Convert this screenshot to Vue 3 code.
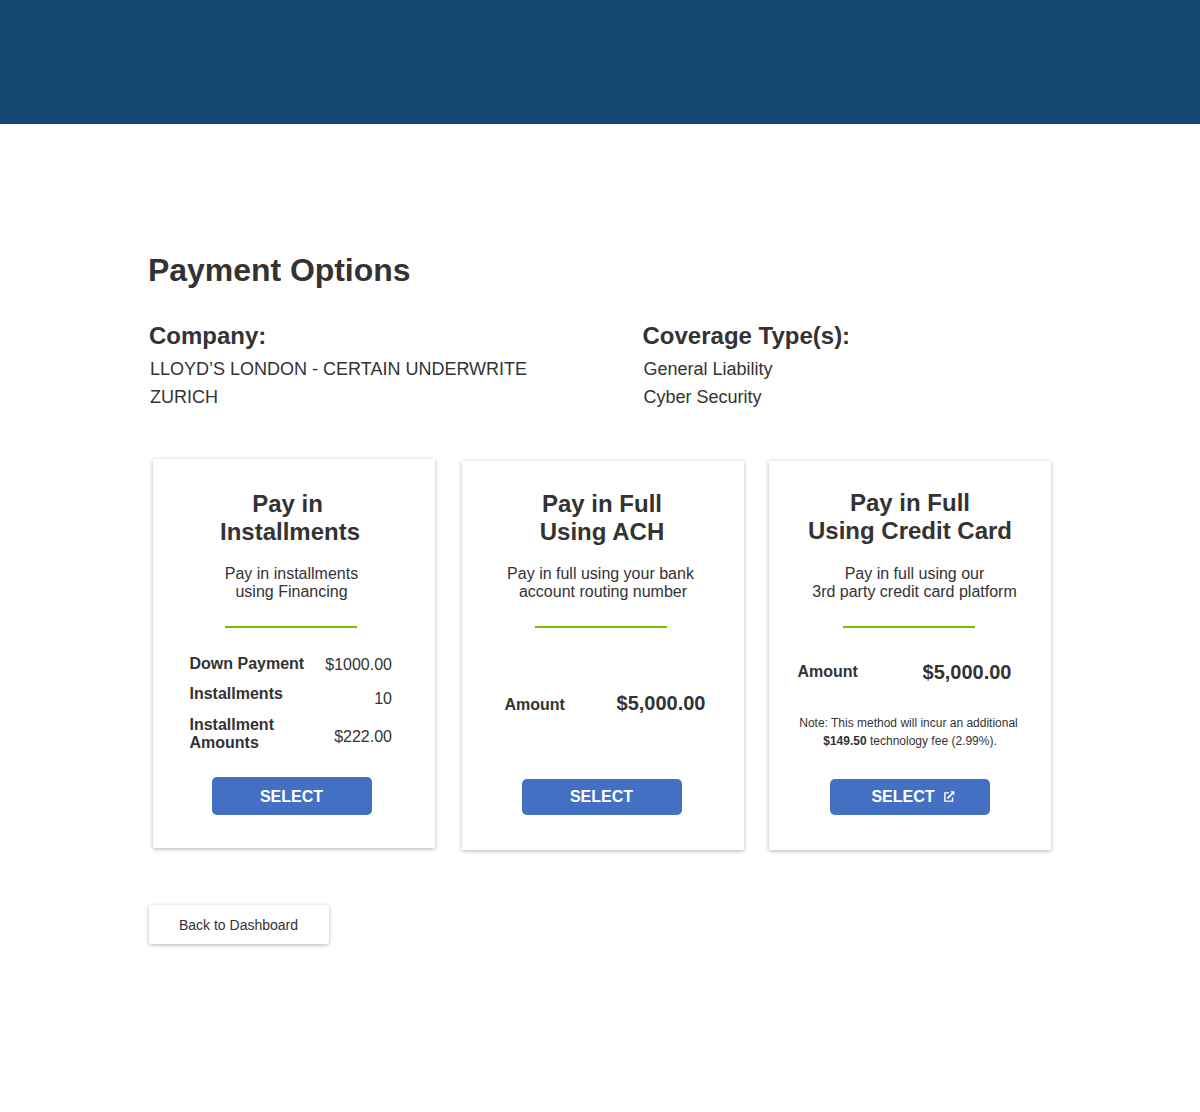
<script setup>
import { ref } from 'vue';

const companies = ref(['LLOYD’S LONDON - CERTAIN UNDERWRITE', 'ZURICH']);
const coverages = ref(['General Liability', 'Cyber Security']);
</script>

<template>
  <div class="page">
    <header class="banner"></header>
    <main class="content">
      <h1>Payment Options</h1>

      <section class="summary">
        <div class="summary-col">
          <h2>Company:</h2>
          <ul>
            <li v-for="company in companies" :key="company">{{ company }}</li>
          </ul>
        </div>
        <div class="summary-col">
          <h2>Coverage Type(s):</h2>
          <ul>
            <li v-for="coverage in coverages" :key="coverage">{{ coverage }}</li>
          </ul>
        </div>
      </section>

      <section class="cards">
        <article class="card installments">
          <h3><span class="lead">Pay in</span><br>Installments</h3>
          <p class="info">Pay in installments<br>using Financing</p>
          <hr>
          <div class="details plan">
            <ul class="labels">
              <li>Down Payment</li>
              <li>Installments</li>
              <li>Installment<br>Amounts</li>
            </ul>
            <ul class="values">
              <li>$1000.00</li>
              <li>10</li>
              <li>$222.00</li>
            </ul>
          </div>
          <button class="btn">SELECT</button>
        </article>

        <article class="card ach">
          <h3>Pay in Full<br>Using ACH</h3>
          <p class="info"><span class="lead">Pay in full using your bank</span><br>account routing number</p>
          <hr>
          <div class="details">
            <div class="amount">
              <span class="label">Amount</span>
              <span class="total">$5,000.00</span>
            </div>
          </div>
          <button class="btn">SELECT</button>
        </article>

        <article class="card credit">
          <h3>Pay in Full<br>Using Credit Card</h3>
          <p class="info">Pay in full using our<br>3rd party credit card platform</p>
          <hr>
          <div class="details">
            <div class="amount">
              <span class="label">Amount</span>
              <span class="total">$5,000.00</span>
            </div>
            <p class="note"><span class="lead">Note: This method will incur an additional</span><br><b>$149.50</b> technology fee (2.99%).</p>
          </div>
          <button class="btn">
            SELECT
            <svg class="external" viewBox="0 0 11 11" width="11" height="11" fill="none" stroke="#fff">
              <path d="M5 1.9H0.9V10.1H8.6V6.4" stroke-width="1.4" />
              <path d="M3.4 7.4L8.4 2.4" stroke-width="1.7" />
              <path d="M6.2 0.3H10.3V4.4Z" fill="#fff" stroke="none" />
            </svg>
          </button>
        </article>
      </section>

      <button class="back">Back to Dashboard</button>
    </main>
  </div>
</template>

<style>
body {
  margin: 0;
  background: #fff;
}
</style>

<style scoped>
.page {
  min-height: 1112px;
  font-family: "Liberation Sans", Arial, sans-serif;
  font-size: 16px;
  line-height: 18px;
  color: #333;
}
.banner {
  height: 124px;
  background: #144771;
}
.content {
  width: 904px;
  padding: 127px 0 0 148px;
}
h1, h2, h3, p, ul {
  margin: 0;
  padding: 0;
}
ul {
  list-style: none;
}
h1 {
  font-size: 32px;
  line-height: 38px;
  letter-spacing: -0.05px;
}
.summary {
  display: grid;
  grid-template-columns: 493.5px 1fr;
  margin: 33px 0 0 1px;
}
.summary h2 {
  font-size: 24px;
  line-height: 28px;
}
.summary ul {
  margin-top: 5px;
  padding-left: 1px;
  font-size: 18px;
  line-height: 28px;
}
.cards {
  display: flex;
  align-items: flex-start;
  margin: 48px 0 0 5px;
}
.card {
  box-sizing: border-box;
  display: flex;
  flex-direction: column;
  align-items: center;
  width: 282px;
  height: 389px;
  background: #fff;
  border-radius: 1px;
  box-shadow: 0 1px 4px rgba(0, 0, 0, 0.3);
}
.installments {
  padding: 31px 6px 0 0;
}
.ach {
  margin: 2px 25px 0 27px;
  padding: 29px 4px 0 0;
}
.credit {
  margin-top: 2px;
  padding-top: 28px;
}
.card h3 {
  font-size: 24px;
  line-height: 28px;
  text-align: center;
}
.installments h3 {
  padding-right: 2px;
}
.ach h3 {
  padding-left: 2px;
}
.lead {
  padding-right: 5px;
}
.info {
  margin-top: 19px;
  text-align: center;
}
.installments .info {
  padding-left: 1px;
}
.ach .info {
  padding-left: 4px;
}
.credit .info {
  margin-top: 20px;
  padding-left: 9px;
}
.card hr {
  width: 132px;
  height: 2px;
  margin: 25px 0 0;
  border: 0;
  background: #7fba00;
}
.credit hr {
  margin-right: 2px;
}
.details {
  box-sizing: border-box;
  width: 203px;
  height: 151px;
}
.plan {
  display: flex;
  justify-content: space-between;
  height: 149px;
  padding-top: 27px;
}
.labels {
  font-weight: bold;
}
.labels li {
  margin-bottom: 12px;
}
.labels li:last-child {
  margin-top: 13px;
}
.values {
  padding: 1px 0.5px 0 0;
  text-align: right;
}
.values li + li {
  margin-top: 16px;
}
.values li:last-child {
  margin-top: 20px;
}
.amount {
  display: flex;
  justify-content: space-between;
  align-items: baseline;
  font-weight: bold;
}
.total {
  font-size: 20px;
  line-height: 24px;
}
.ach .details {
  width: 201px;
  padding: 63px 0 0;
  margin-left: 8px;
}
.credit .details {
  width: 222px;
  padding-top: 32px;
  margin-right: 3px;
}
.credit .amount {
  align-items: flex-start;
  padding-right: 8px;
}
.credit .label {
  padding-top: 3px;
}
.note {
  margin: 30px -3px 0 0;
  font-size: 12px;
  text-align: center;
}
.note .lead {
  padding-right: 3px;
}
.btn {
  display: flex;
  align-items: center;
  justify-content: center;
  flex: none;
  width: 160px;
  height: 36px;
  margin-left: 2px;
  padding: 0 1px 0 0;
  border: 0;
  border-radius: 5px;
  background: #4470c4;
  color: #fff;
  font: bold 16px/18px "Liberation Sans", Arial, sans-serif;
  cursor: pointer;
}
.installments .btn {
  height: 38px;
  padding-top: 2px;
}
.credit .btn {
  margin-left: 0;
  padding: 0 0 0 6px;
}
.external {
  margin: 0 0 2px 9px;
}
.back {
  display: block;
  width: 180px;
  height: 39px;
  margin: 55px 0 0 1px;
  padding: 0 1px 0 0;
  border: 0;
  border-radius: 3px;
  background: #fff;
  box-shadow: 0 1px 4px rgba(0, 0, 0, 0.3);
  color: #333;
  font: 14px/18px "Liberation Sans", Arial, sans-serif;
  cursor: pointer;
}
</style>
